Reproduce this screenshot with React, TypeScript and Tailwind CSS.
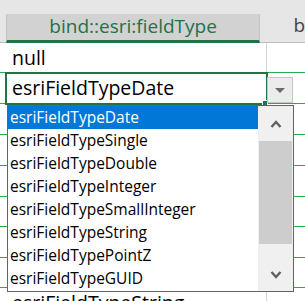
import React from "react";

const items = [
  "esriFieldTypeDate",
  "esriFieldTypeSingle",
  "esriFieldTypeDouble",
  "esriFieldTypeInteger",
  "esriFieldTypeSmallInteger",
  "esriFieldTypeString",
  "esriFieldTypePointZ",
  "esriFieldTypeGUID",
];

// row heights below the header, bottom gridline included
const rows: { h: string; text?: string }[] = [
  { h: "h-[30px]", text: "null" },
  { h: "h-[31px]", text: "esriFieldTypeDate" },
  { h: "h-[31px]" },
  { h: "h-[31px]" },
  { h: "h-[31px]" },
  { h: "h-[30px]" },
  { h: "h-[31px]" },
  { h: "h-[30px]" },
  { h: "h-[31px]", text: "esriFieldTypeString" },
];

function Chevron({ up }: { up?: boolean }) {
  return (
    <svg width="12" height="8" viewBox="0 0 12 8">
      <path
        d={up ? "M1.5 7 L6 2 L10.5 7" : "M1.5 1 L6 6 L10.5 1"}
        fill="none"
        stroke="#5f5f5f"
        strokeWidth="2.4"
      />
    </svg>
  );
}

export default function App() {
  return (
    <div
      className="relative w-[305px] h-[301px] overflow-hidden bg-white"
      style={{ fontFamily: '"Open Sans", "Noto Sans", sans-serif' }}
    >
      {/* ribbon remnant + column headers */}
      <div className="flex h-[43px] bg-[#e6e6e6]">
        <div className="w-[6px] border-b border-[#bdbdbd]" />
        <div className="w-[261px] flex flex-col">
          <div className="h-[14px]" />
          <div className="flex-1 flex items-center justify-center bg-[#d2d2d2] border-l border-r border-[#c4c4c4] border-b-[3px] border-b-[#217346] text-[19px] text-[#217346] leading-none pb-[2px]">
            bind::esri:fieldType
          </div>
        </div>
        <div className="flex-1 flex items-end border-b border-[#bdbdbd] pb-[7px] pl-[33px] text-[19px] text-[#444] leading-none">
          b
        </div>
      </div>

      {/* grid rows */}
      <div className="flex flex-col">
        {rows.map((r, i) => (
          <div key={i} className={`flex ${r.h} border-b border-[#21b14b]`}>
            <div className="w-[6px]" />
            <div className="w-[261px] border-r border-[#d4d4d4] flex items-center pl-[6px] text-[19.5px] text-black leading-none">
              {r.text}
            </div>
            <div className="flex-1" />
          </div>
        ))}
      </div>

      {/* active cell border + fill handle */}
      <div className="absolute left-[5px] top-[72px] w-[263px] h-[33px] border-2 border-[#217346]" />
      <div className="absolute left-[262px] top-[100px] w-[6px] h-[6px] bg-[#217346] border border-white" />

      {/* dropdown button */}
      <div className="absolute left-[267px] top-[77px] w-[26px] h-[26px] bg-[#ececec] border border-[#c6c6c6] flex items-center justify-center">
        <svg width="10" height="5" viewBox="0 0 10 5">
          <path d="M0 0 H10 L5 5 Z" fill="#6a6a6a" />
        </svg>
      </div>

      {/* dropdown list */}
      <div className="absolute left-[7px] top-[105px] w-[287px] h-[187px] bg-white border border-[#646464] flex">
        <div className="flex-1 flex flex-col">
          {items.map((t, i) => (
            <div
              key={t}
              className={`h-[23px] flex items-center pl-[2px] text-[15.5px] leading-none ${
                i === 0 ? "bg-[#0078d7] text-white" : "text-black"
              }`}
            >
              {t}
            </div>
          ))}
        </div>
        <div className="w-[35px] bg-[#f0f0f0] flex flex-col">
          <div className="h-[35px] flex items-center justify-center">
            <Chevron up />
          </div>
          <div className="h-[103px] mx-[1px] bg-[#cdcdcd]" />
          <div className="flex-1 flex items-end justify-center pb-[12px]">
            <Chevron />
          </div>
        </div>
      </div>
    </div>
  );
}
